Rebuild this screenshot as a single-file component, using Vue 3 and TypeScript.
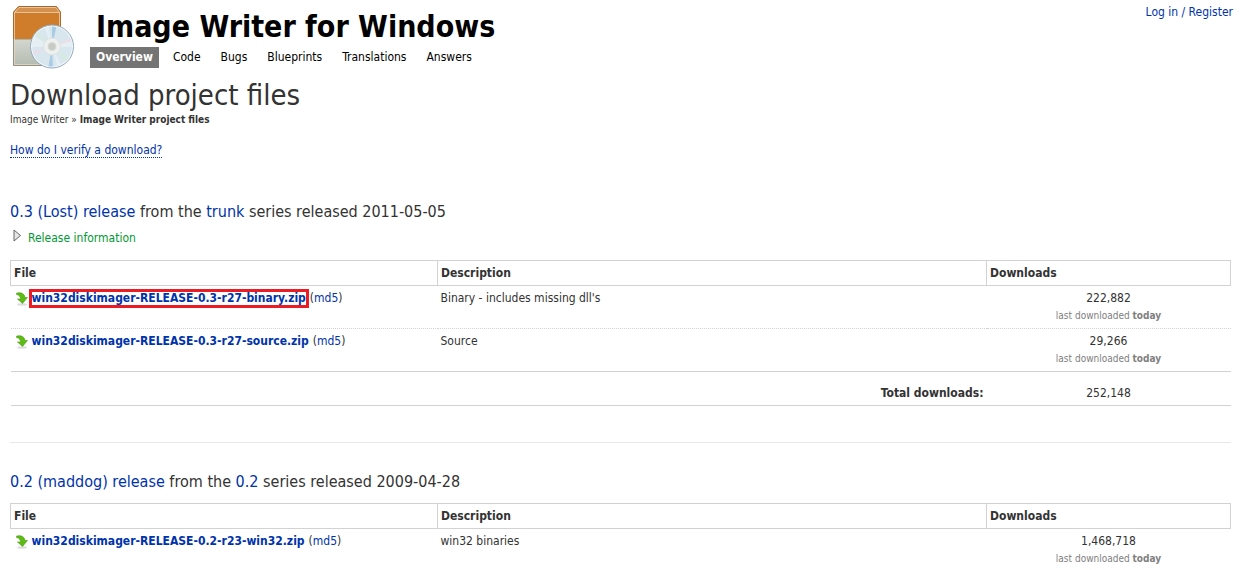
<script setup lang="ts">
interface DownloadFile {
  name: string
  description: string
  downloads: string
  marked?: boolean
}

interface Release {
  title: string
  series: string
  date: string
  hasInfo: boolean
  total?: string
  files: DownloadFile[]
}

const tabs: string[] = ['Overview', 'Code', 'Bugs', 'Blueprints', 'Translations', 'Answers']

const releases: Release[] = [
  {
    title: '0.3 (Lost) release',
    series: 'trunk',
    date: '2011-05-05',
    hasInfo: true,
    total: '252,148',
    files: [
      {
        name: 'win32diskimager-RELEASE-0.3-r27-binary.zip',
        description: "Binary - includes missing dll's",
        downloads: '222,882',
        marked: true,
      },
      {
        name: 'win32diskimager-RELEASE-0.3-r27-source.zip',
        description: 'Source',
        downloads: '29,266',
      },
    ],
  },
  {
    title: '0.2 (maddog) release',
    series: '0.2',
    date: '2009-04-28',
    hasInfo: false,
    files: [
      {
        name: 'win32diskimager-RELEASE-0.2-r23-win32.zip',
        description: 'win32 binaries',
        downloads: '1,468,718',
      },
    ],
  },
]
</script>

<template>
  <div class="page">
    <header class="masthead">
      <svg class="logo" viewBox="0 0 66 66" aria-hidden="true">
        <defs>
          <linearGradient id="box-base" x1="0" y1="0" x2="0" y2="1">
            <stop offset="0" stop-color="#d3d8d0" />
            <stop offset="1" stop-color="#b4bbb0" />
          </linearGradient>
          <clipPath id="disc-clip"><circle cx="42" cy="42.500" r="20" /></clipPath>
        </defs>
        <path d="M3.500 35H50.500V61.500H3.500Z" fill="url(#box-base)" stroke="#8b9188" />
        <path d="M3.500 35V8L8.500 2.500H46.500L50.500 8V35" fill="#cf7c2b" stroke="#a86a2c" />
        <path d="M4.500 8L9 3.500H46L49.500 8Z" fill="#d3924f" />
        <path d="M4.500 60.500V8.500H49.500V60.500Z M4.500 8.500L9 3.500H46L49.500 8.500" fill="none" stroke="#f1d6b8" stroke-opacity="0.75" />
        <circle cx="42" cy="42.500" r="21.500" fill="#f5f9fb" stroke="#93aabd" />
        <circle cx="42" cy="42.500" r="20" fill="#d8e6ee" />
        <g clip-path="url(#disc-clip)">
          <path d="M42 42.500L20 43V30Z M42 42.500L64 33V43Z" fill="#e6eff4" />
          <path d="M42 42.500L42 20H47Z M42 42.500L43 65H38Z" fill="#a9cbe6" />
          <path d="M42 42.500L34 22L38 20Z M42 42.500L52 63L48 65Z" fill="#e4f0f5" />
          <path d="M42 42.500L21 48V52Z M42 42.500L63 37V33Z" fill="#ecdde8" />
          <path d="M42 42.500L25 31L28 28Z M42 42.500L59 54L56 57Z" fill="#d6eadf" />
        </g>
        <circle cx="42" cy="42.500" r="8.500" fill="#edf0ef" stroke="#dce2e3" />
        <circle cx="42" cy="42.500" r="4" fill="#c7cbc4" stroke="#d9ddd8" />
      </svg>
      <div class="branding">
        <div class="project">Image Writer for Windows</div>
        <nav class="tabs">
          <a v-for="(tab, i) in tabs" :key="tab" href="#" :class="{ active: i === 0 }">{{ tab }}</a>
        </nav>
      </div>
      <a class="login" href="#">Log in / Register</a>
    </header>

    <main>
      <h1>Download project files</h1>
      <div class="crumbs"><a href="#">Image Writer</a> » <strong>Image Writer project files</strong></div>
      <p class="help"><a href="#">How do I verify a download?</a></p>

      <section v-for="release in releases" :key="release.title" class="release">
        <h2>
          <a href="#">{{ release.title }}</a> from the <a href="#">{{ release.series }}</a>
          series released {{ release.date }}
        </h2>
        <button v-if="release.hasInfo" type="button" class="expander">
          <svg width="8" height="13" viewBox="0 0 8 13" aria-hidden="true">
            <path d="M1 1L7.500 6.500L1 12Z" fill="#e6e6e6" stroke="#666666" />
          </svg>
          <span>Release information</span>
        </button>
        <table>
          <colgroup>
            <col class="col-file" />
            <col class="col-description" />
            <col class="col-downloads" />
          </colgroup>
          <thead>
            <tr>
              <th scope="col">File</th>
              <th scope="col">Description</th>
              <th scope="col">Downloads</th>
            </tr>
          </thead>
          <tbody>
            <tr v-for="file in release.files" :key="file.name">
              <td>
                <div class="file">
                  <svg width="14" height="14" viewBox="0 0 14 14" aria-hidden="true">
                    <ellipse cx="7" cy="12.500" rx="5" ry="1.200" fill="#dddddd" />
                    <path d="M1.500 1.200C5 0 9.500 1 10 5.500H12.500L7.500 11.500L2.500 7H5.500C5.500 4.500 4 2.800 1.500 2.500Z" fill="#5dbb12" stroke="#4c9c1c" stroke-width="0.600" />
                  </svg>
                  <a href="#" class="file-name" :class="{ marked: file.marked }">{{ file.name }}</a>
                  <span class="sum">(<a href="#">md5</a>)</span>
                </div>
              </td>
              <td>{{ file.description }}</td>
              <td class="count">
                {{ file.downloads }}
                <div class="last">last downloaded <strong>today</strong></div>
              </td>
            </tr>
          </tbody>
          <tfoot v-if="release.total">
            <tr>
              <th colspan="2" scope="row">Total downloads:</th>
              <td class="count">{{ release.total }}</td>
            </tr>
          </tfoot>
        </table>
      </section>
    </main>
  </div>
</template>

<style>
body {
  margin: 0;
  background: #ffffff;
}
</style>

<style scoped>
.page {
  padding: 4px 9px 0 10px;
  font: 12px/18px "DejaVu Sans Condensed", "DejaVu Sans", sans-serif;
  color: #333333;
}
a {
  color: #0033aa;
  text-decoration: none;
}
.masthead {
  display: flex;
  align-items: flex-start;
}
.logo {
  width: 66px;
  height: 66px;
  flex: none;
}
.branding {
  flex: 1;
  margin-left: 14px;
}
.project {
  padding: 4px 0 0 6px;
  font-size: 30px;
  font-weight: bold;
  line-height: 38px;
  color: #000000;
}
.tabs {
  display: flex;
  gap: 8px;
  margin-top: 1px;
}
.tabs a {
  padding: 0 6px;
  line-height: 21px;
  color: #000000;
}
.tabs a.active {
  background: #747474;
  color: #ffffff;
  font-weight: bold;
}
.login {
  margin-right: -2px;
  line-height: 16px;
}
h1 {
  margin: 7px 0 0;
  font-size: 29px;
  font-weight: normal;
  line-height: 36px;
}
.crumbs {
  font-size: 10px;
  line-height: 14px;
}
.crumbs a {
  color: #333333;
}
.help {
  margin: 14px 0 0;
  line-height: 18px;
}
.help a {
  border-bottom: 1px dotted #0033aa;
}
.release {
  padding-top: 42px;
}
.release + .release {
  margin-top: 36px;
  padding-top: 28px;
  border-top: 1px solid #e8e8e8;
}
h2 {
  margin: 0 0 10px;
  font-size: 16px;
  font-weight: normal;
  line-height: 22px;
}
.expander {
  display: flex;
  gap: 7px;
  margin: -4px 0 13px 3px;
  padding: 0;
  border: 0;
  background: none;
  font: inherit;
  color: #009933;
}
table {
  width: 100%;
  border-collapse: collapse;
  table-layout: fixed;
}
.col-file {
  width: 35%;
}
.col-description {
  width: 45%;
}
.col-downloads {
  width: 20%;
}
th,
td {
  padding: 3px;
  text-align: left;
  vertical-align: top;
}
thead th {
  border: 1px solid #d2d2d2;
  line-height: 18px;
}
tbody tr {
  border-bottom: 1px dotted #d2d2d2;
}
tbody tr:last-child {
  border-bottom: 1px solid #d2d2d2;
}
tfoot tr {
  border-bottom: 1px solid #d2d2d2;
}
tfoot th,
tfoot td {
  padding-top: 12px;
}
tfoot th {
  text-align: right;
}
.file {
  display: flex;
  align-items: center;
}
.file svg {
  margin: 2px 1px 0;
}
.file-name {
  margin-left: 2px;
  font-weight: bold;
  line-height: 13px;
}
.file-name.marked {
  outline: 3px solid #ed1c24;
}
.sum {
  margin-left: 4px;
}
.count {
  text-align: center;
}
.last {
  font-size: 10px;
  color: #808080;
}
</style>
